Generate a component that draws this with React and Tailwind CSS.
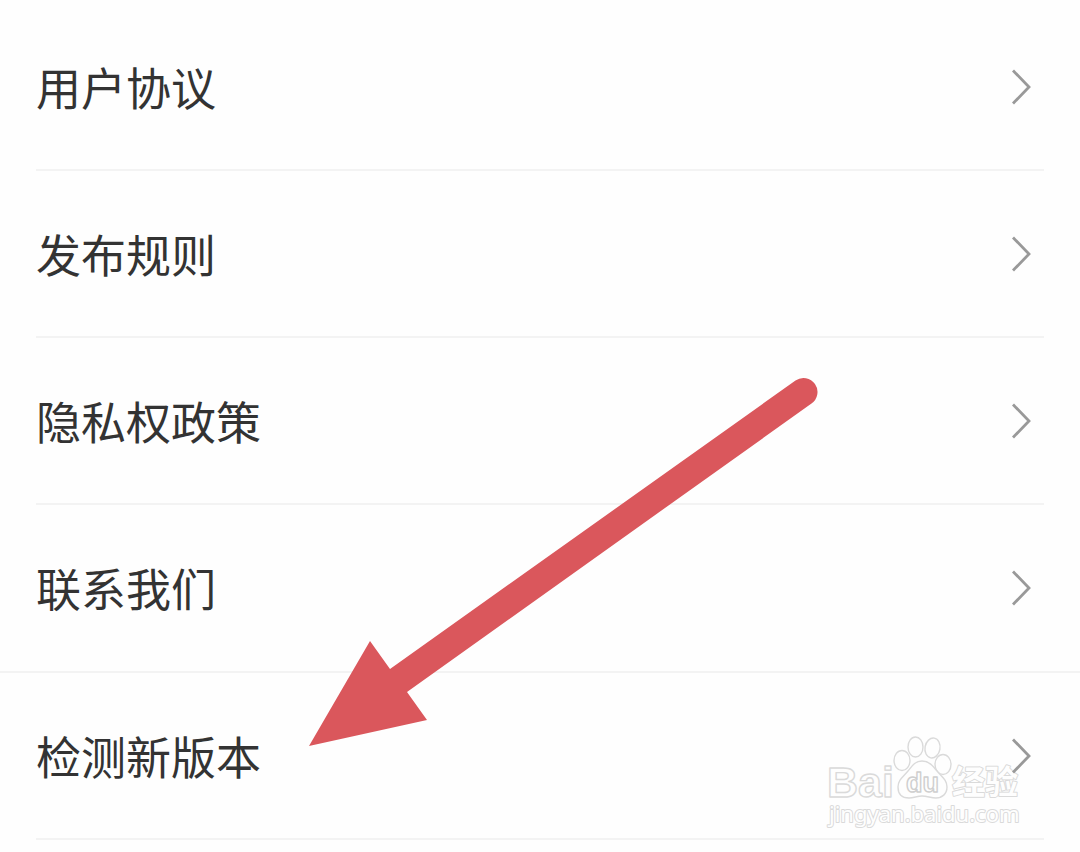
const items = [
  { label: "用户协议", href: "#agreement" },
  { label: "发布规则", href: "#rules" },
  { label: "隐私权政策", href: "#privacy" },
  { label: "联系我们", href: "#contact", fullLine: true },
  { label: "检测新版本", href: "#version" },
];

function Chevron() {
  return (
    <svg
      className="mr-3 h-9 w-5 shrink-0"
      viewBox="0 0 20 36"
      fill="none"
      stroke="#999999"
      strokeWidth="2.8"
      aria-hidden="true"
    >
      <path d="M1 1.5 L17 18 L1 34.5" />
    </svg>
  );
}

function SettingRow({ label, href, fullLine }) {
  return (
    <li className={fullLine ? "border-b-2 border-[#f3f3f3]" : "px-9"}>
      <a
        href={href}
        className={
          fullLine
            ? "mx-9 flex h-[166px] items-center justify-between"
            : "flex h-[167px] items-center justify-between border-b-2 border-[#f3f3f3]"
        }
      >
        <span className="text-[45px] leading-[60px]">{label}</span>
        <Chevron />
      </a>
    </li>
  );
}

// red pointer drawn over the list
function Arrow() {
  return (
    <svg
      className="pointer-events-none absolute left-[308px] top-[377px] h-[370px] w-[510px]"
      viewBox="308 377 510 370"
      fill="#da575c"
      aria-hidden="true"
    >
      <path d="M309 746 L370 641 L390 669 L795.5 380.5 A14 14 0 0 1 811.5 403.5 L407 692 L427 720 Z" />
    </svg>
  );
}

// sits under the rows, so the last chevron stays on top of it
function Watermark() {
  return (
    <svg
      className="pointer-events-none absolute bottom-3 right-[52px] h-[96px] w-[202px]"
      viewBox="826 732 202 96"
      fill="#fefefe"
      stroke="#dadada"
      strokeWidth="1.4"
      strokeLinejoin="round"
      role="img"
      aria-label="Baidu 经验"
    >
      <ellipse cx="902" cy="760.5" rx="8" ry="10" />
      <ellipse cx="915.5" cy="747" rx="7.5" ry="10" />
      <ellipse cx="932.5" cy="748" rx="7.5" ry="10" transform="rotate(10 932.5 748)" />
      <ellipse cx="943" cy="764.5" rx="8" ry="10" />
      <path d="M922 761 C929 761 933 766 937 771 C942 777 947 780 947 787 C947 794 942 798 936 798 C931 798 927 796 922 796 C917 796 914 798 909 798 C902 798 898 794 898 787 C898 780 903 777 908 771 C912 766 915 761 922 761 Z" />
      <g fontFamily='"Liberation Sans", "Noto Sans CJK SC", sans-serif'>
        <text x="827" y="797" fontSize="43" fontWeight="700">Bai</text>
        <text x="906" y="792" fontSize="27" fontWeight="700" stroke="#cfcfcf">du</text>
        <text x="952" y="794" fontSize="33" fontWeight="700" strokeWidth="2" paintOrder="stroke">经验</text>
        <text
          x="829"
          y="822"
          fontSize="22"
          fontFamily='"Noto Sans", sans-serif'
          strokeWidth="2"
          paintOrder="stroke"
        >
          jingyan.baidu.com
        </text>
      </g>
    </svg>
  );
}

export default function App() {
  return (
    <main className="relative min-h-screen overflow-hidden bg-[#fefefe] font-['Noto_Sans_CJK_SC',sans-serif] text-[#333333]">
      <div className="relative pt-1">
        <Watermark />
        <ul className="relative">
          {items.map((item) => (
            <SettingRow key={item.href} {...item} />
          ))}
        </ul>
        <Arrow />
      </div>
    </main>
  );
}
